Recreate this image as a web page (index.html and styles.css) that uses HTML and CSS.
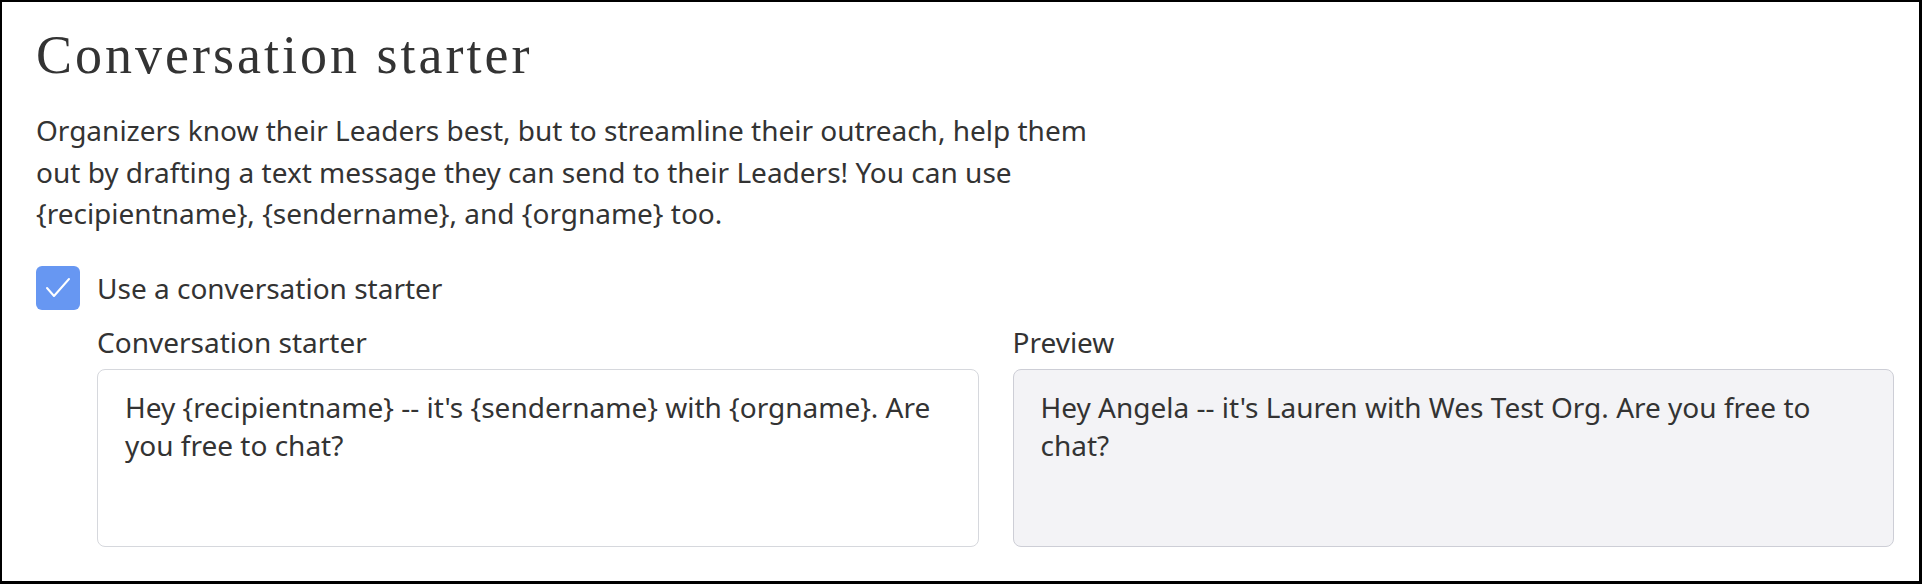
FILE: index.html
```html
<!DOCTYPE html>
<html>
<head>
<meta charset="utf-8">
<link rel="stylesheet" href="styles.css">
</head>
<body>
<div class="card">
  <h1 class="title">Conversation starter</h1>
  <p class="intro">Organizers know their Leaders best, but to streamline their outreach, help them out by drafting a text message they can send to their Leaders! You can use {recipientname}, {sendername}, and {orgname} too.</p>
  <label class="check-row">
    <span class="checkbox">
      <svg width="28" height="26" viewBox="0 0 28 26"><path d="M3 13 L10 21 L25 4" fill="none" stroke="#fff" stroke-width="2" stroke-linecap="round" stroke-linejoin="round"/></svg>
    </span>
    <span class="check-label">Use a conversation starter</span>
  </label>
  <div class="fields">
    <div class="field">
      <div class="field-label">Conversation starter</div>
      <textarea class="box input">Hey {recipientname} -- it's {sendername} with {orgname}. Are you free to chat?</textarea>
    </div>
    <div class="field">
      <div class="field-label">Preview</div>
      <div class="box preview">Hey Angela -- it's Lauren with Wes Test Org. Are you free to chat?</div>
    </div>
  </div>
</div>
</body>
</html>
```
FILE: styles.css
```css
html, body {
  margin: 0;
  padding: 0;
  background: #fff;
}
.card {
  box-sizing: border-box;
  width: 1922px;
  height: 584px;
  border-style: solid;
  border-color: #000;
  border-width: 2px 3px 3px 2px;
  padding: 22px 25px 0 34px;
  font-family: "Noto Sans", "Open Sans", sans-serif;
  color: #333;
}
.title {
  margin: 0;
  font-family: "Liberation Serif", serif;
  font-weight: normal;
  font-size: 54px;
  line-height: 62px;
  letter-spacing: 3px;
  color: #333;
}
.intro {
  margin: 24px 0 0 0;
  max-width: 1070px;
  font-size: 28px;
  line-height: 41.5px;
}
.check-row {
  display: flex;
  align-items: center;
  gap: 17px;
  margin-top: 31px;
}
.checkbox {
  box-sizing: border-box;
  width: 44px;
  height: 44px;
  border-radius: 6px;
  background: #6797f2;
  display: flex;
  align-items: center;
  justify-content: center;
}
.check-label {
  font-size: 28px;
  line-height: 34px;
}
.fields {
  margin-left: 61px;
  margin-top: 15px;
  display: grid;
  grid-template-columns: 1fr 1fr;
  column-gap: 34px;
}
.field-label {
  font-size: 28px;
  line-height: 34px;
  margin-bottom: 10px;
}
.box {
  box-sizing: border-box;
  width: 100%;
  height: 178px;
  border: 1.5px solid #d6d8dd;
  border-radius: 8px;
  padding: 18px 30px 18px 27px;
  font-family: "Noto Sans", "Open Sans", sans-serif;
  font-size: 28px;
  line-height: 38px;
  color: #333;
  margin: 0;
}
.input {
  display: block;
  resize: none;
  background: #fff;
  outline: none;
  overflow: hidden;
}
.preview {
  background: #f3f3f6;
  border-color: #cdced6;
}
```
